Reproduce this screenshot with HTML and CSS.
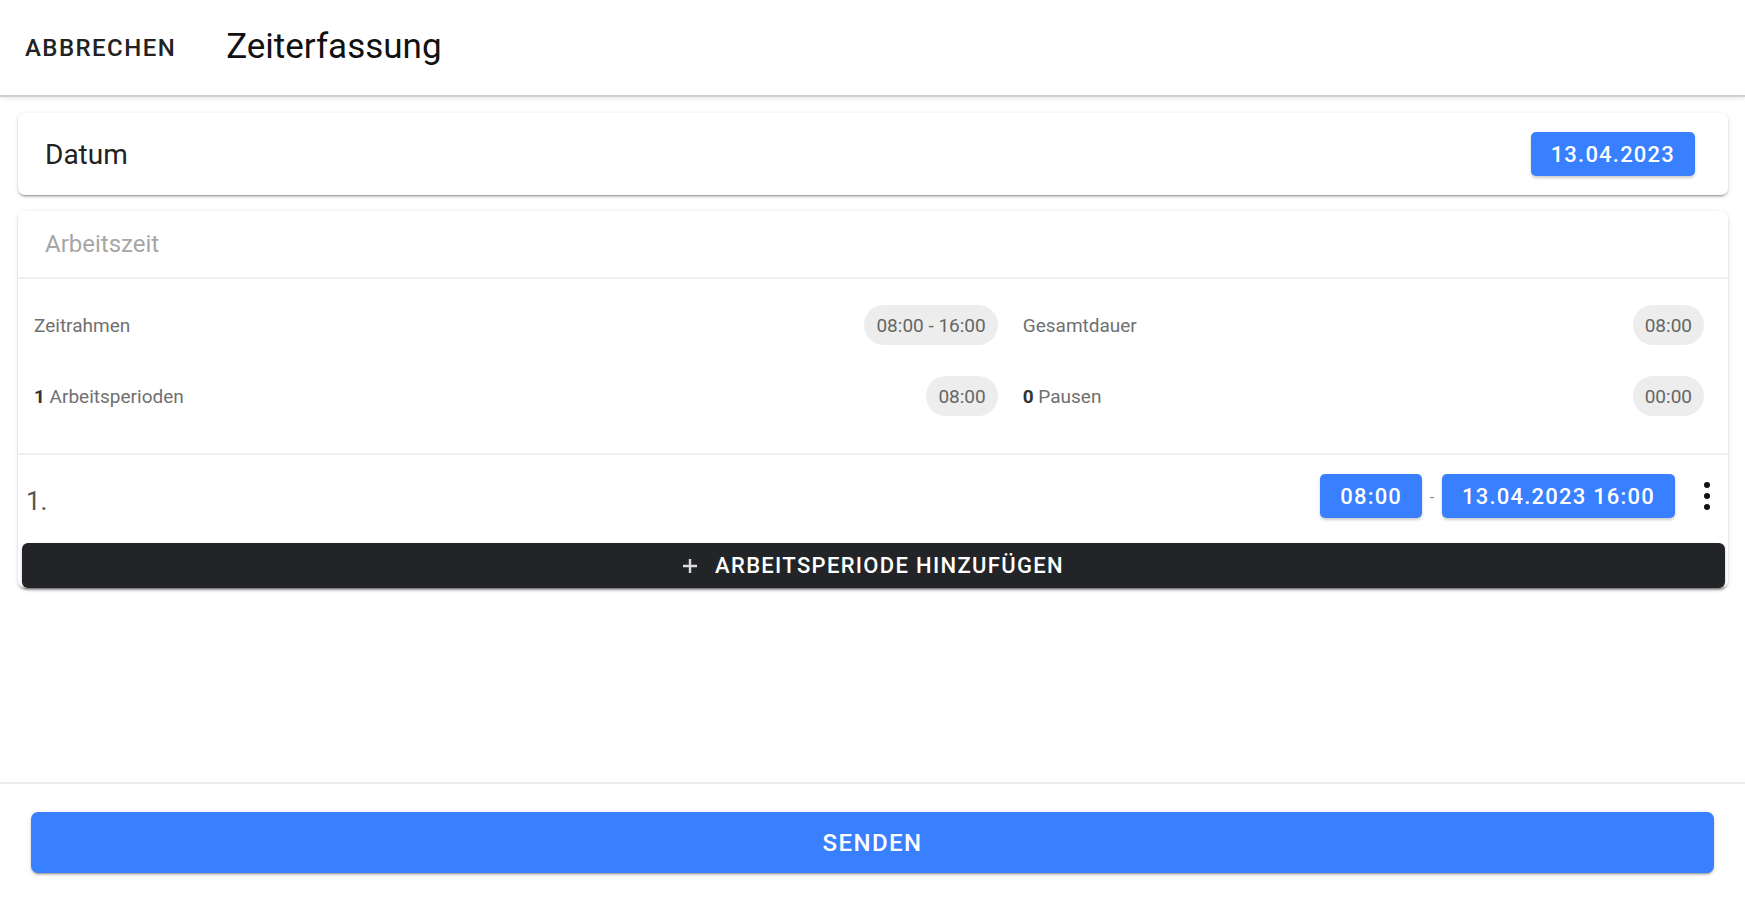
FILE: index.html
```html
<!DOCTYPE html>
<html lang="de">
<head>
    <meta charset="UTF-8">
    <meta name="viewport" content="width=device-width, initial-scale=1.0">
    <title>Zeiterfassung</title>
    <link rel="stylesheet" href="styles.css">
</head>
<body>
    <header class="toolbar">
        <button class="toolbar-btn">Abbrechen</button>
        <h1 class="toolbar-title">Zeiterfassung</h1>
    </header>

    <main class="content">
        <section class="card card-row">
            <span class="card-label">Datum</span>
            <button class="btn-small">13.04.2023</button>
        </section>

        <section class="card">
            <div class="card-head">Arbeitszeit</div>
            <div class="stats">
                <div class="stat">
                    <span class="stat-label">Zeitrahmen</span>
                    <span class="chip">08:00 - 16:00</span>
                </div>
                <div class="stat">
                    <span class="stat-label">Gesamtdauer</span>
                    <span class="chip">08:00</span>
                </div>
                <div class="stat">
                    <span class="stat-label"><b>1</b> Arbeitsperioden</span>
                    <span class="chip">08:00</span>
                </div>
                <div class="stat">
                    <span class="stat-label"><b>0</b> Pausen</span>
                    <span class="chip">00:00</span>
                </div>
            </div>
            <div class="period">
                <span class="period-num">1.</span>
                <div class="period-times">
                    <button class="btn-small">08:00</button>
                    <span class="dash">-</span>
                    <button class="btn-small">13.04.2023 16:00</button>
                </div>
                <button class="kebab" aria-label="Mehr">
                    <svg width="10" height="32" viewBox="0 0 10 32">
                        <circle cx="5" cy="5" r="3" fill="#111"/>
                        <circle cx="5" cy="16" r="3" fill="#111"/>
                        <circle cx="5" cy="27" r="3" fill="#111"/>
                    </svg>
                </button>
            </div>
            <button class="btn-add">
                <svg width="16" height="16" viewBox="0 0 16 16">
                    <path d="M8 1v14M1 8h14" stroke="#ddd" stroke-width="2.4" fill="none"/>
                </svg>
                Arbeitsperiode hinzufügen
            </button>
        </section>
    </main>

    <footer class="footer">
        <button class="btn-send">Senden</button>
    </footer>
</body>
</html>
```

FILE: styles.css
```css
body {
    margin: 0;
    height: 100vh;
    display: flex;
    flex-direction: column;
    font-family: Roboto, "Liberation Sans", sans-serif;
    color: #111;
    background: #fff;
}
button {
    font-family: inherit;
    cursor: pointer;
}
.toolbar {
    height: 95px;
    flex-shrink: 0;
    display: flex;
    align-items: center;
    gap: 50px;
    padding-left: 25px;
    border-bottom: 2px solid #cfcfcf;
    box-shadow: 0 2px 4px rgba(0, 0, 0, 0.08);
}
.toolbar-btn {
    background: none;
    border: none;
    padding: 0;
    font-size: 24px;
    font-weight: 500;
    letter-spacing: 0.06em;
    text-transform: uppercase;
    color: #222;
}
.toolbar-title {
    margin: 0 0 2px;
    font-size: 35px;
    font-weight: 400;
    color: #111;
}
.content {
    flex: 1;
    padding: 16px 17px 0 18px;
}
.card {
    background: #fff;
    border-radius: 7px;
    margin-bottom: 16px;
    box-shadow: 0 3px 1px -2px rgba(0, 0, 0, 0.2), 0 2px 2px 0 rgba(0, 0, 0, 0.14), 0 1px 5px 0 rgba(0, 0, 0, 0.12);
}
.card-row {
    height: 82px;
    display: flex;
    align-items: center;
    justify-content: space-between;
    padding: 0 33px 0 27px;
}
.card-label {
    font-size: 28px;
    color: #222;
}
.btn-small {
    height: 44px;
    padding: 0 20px;
    border: none;
    border-radius: 5px;
    background: #3880ff;
    color: #fff;
    font-size: 22px;
    font-weight: 500;
    letter-spacing: 0.055em;
    box-shadow: 0 2px 3px rgba(0, 0, 0, 0.2);
}
.card-head {
    height: 66px;
    display: flex;
    align-items: center;
    padding: 0 27px;
    font-size: 24px;
    color: #a6a6a6;
    border-bottom: 2px solid #efefef;
}
.stats {
    display: grid;
    grid-template-columns: 58fr 41fr;
    column-gap: 25px;
    row-gap: 23px;
    padding: 22px 24px 33px 16px;
    border-bottom: 2px solid #efefef;
}
.stat {
    height: 48px;
    display: flex;
    align-items: center;
    justify-content: space-between;
}
.stat-label {
    font-size: 19px;
    color: #707070;
}
.stat-label b {
    color: #333;
}
.chip {
    height: 40px;
    display: inline-flex;
    align-items: center;
    padding: 0 12px;
    border-radius: 20px;
    background: #ededed;
    font-size: 19px;
    color: #666;
}
.period {
    display: flex;
    align-items: center;
    height: 42px;
    padding: 20px 0 0 8px;
    margin-bottom: 26px;
}
.period-num {
    padding-top: 10px;
    font-size: 26px;
    color: #555;
}
.period-times {
    margin-left: auto;
    display: flex;
    align-items: center;
}
.dash {
    width: 20px;
    text-align: center;
    font-size: 18px;
    color: #999;
}
.kebab {
    width: 36px;
    height: 42px;
    margin-left: 14px;
    margin-right: 3px;
    padding: 0;
    border: none;
    background: none;
    display: flex;
    align-items: center;
    justify-content: center;
}
.btn-add {
    width: calc(100% - 7px);
    height: 45px;
    margin: 0 3.5px 5px;
    display: flex;
    align-items: center;
    justify-content: center;
    gap: 17px;
    border: none;
    border-radius: 6px;
    background: #222428;
    color: #fff;
    font-size: 22px;
    font-weight: 500;
    letter-spacing: 0.06em;
    text-transform: uppercase;
    box-shadow: 0 2px 3px rgba(0, 0, 0, 0.25);
}
.footer {
    flex-shrink: 0;
    padding: 28px 31px 27px;
    border-top: 2px solid #ececec;
}
.btn-send {
    width: 100%;
    height: 61px;
    border: none;
    border-radius: 7px;
    background: #3880ff;
    color: #fff;
    font-size: 24px;
    font-weight: 500;
    letter-spacing: 0.06em;
    text-transform: uppercase;
    box-shadow: 0 3px 1px -2px rgba(0, 0, 0, 0.2), 0 2px 2px 0 rgba(0, 0, 0, 0.14), 0 1px 5px 0 rgba(0, 0, 0, 0.12);
}
```
